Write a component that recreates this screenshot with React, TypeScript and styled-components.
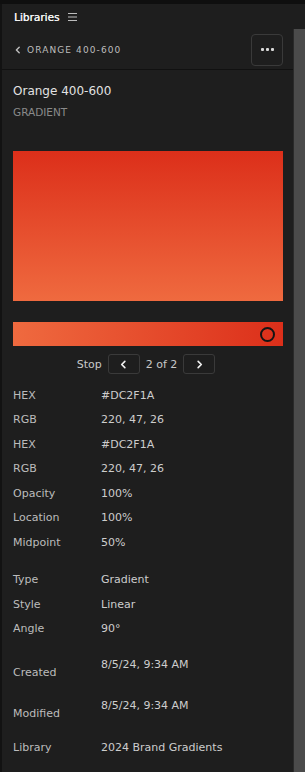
import { createGlobalStyle, styled } from "styled-components";

const GlobalStyle = createGlobalStyle`
  html, body {
    margin: 0;
    padding: 0;
    background: #1e1e1e;
  }
  body {
    font-family: "DejaVu Sans", "Liberation Sans", sans-serif;
    -webkit-font-smoothing: antialiased;
  }
`;

type Row = { label: string; value: string };

const colorRows: Row[] = [
  { label: "HEX", value: "#DC2F1A" },
  { label: "RGB", value: "220, 47, 26" },
  { label: "HEX", value: "#DC2F1A" },
  { label: "RGB", value: "220, 47, 26" },
  { label: "Opacity", value: "100%" },
  { label: "Location", value: "100%" },
  { label: "Midpoint", value: "50%" },
];

const typeRows: Row[] = [
  { label: "Type", value: "Gradient" },
  { label: "Style", value: "Linear" },
  { label: "Angle", value: "90°" },
];

const dateRows: Row[] = [
  { label: "Created", value: "8/5/24, 9:34 AM" },
  { label: "Modified", value: "8/5/24, 9:34 AM" },
];

function Chevron({ dir, size = 9 }: { dir: "left" | "right"; size?: number }) {
  const d = dir === "left" ? "M6 1.5 L2.5 5 L6 8.5" : "M3 1.5 L6.5 5 L3 8.5";
  return (
    <svg width={size} height={size} viewBox="0 0 9 10">
      <path d={d} fill="none" stroke="currentColor" strokeWidth="1.8" strokeLinecap="round" strokeLinejoin="round" />
    </svg>
  );
}

function App() {
  return (
    <Frame>
      <GlobalStyle />
      <TopStrip />
      <Body>
        <Panel>
          <Header>
            <HeaderTitle>Libraries</HeaderTitle>
            <svg width="9" height="8" viewBox="0 0 9 8">
              <path d="M0 0.5 H9 M0 4 H9 M0 7.5 H9" stroke="#bdbdbd" strokeWidth="1" />
            </svg>
          </Header>
          <SubHeader>
            <BackLink>
              <Chevron dir="left" size={8} />
              <span>ORANGE 400-600</span>
            </BackLink>
            <MoreButton>
              <Dot />
              <Dot />
              <Dot />
            </MoreButton>
          </SubHeader>
          <Content>
            <Title>Orange 400-600</Title>
            <Kind>GRADIENT</Kind>
            <Swatch />
            <StopBar>
              <StopHandle />
            </StopBar>
            <StopNav>
              <span>Stop</span>
              <NavButton>
                <Chevron dir="left" />
              </NavButton>
              <span>2 of 2</span>
              <NavButton>
                <Chevron dir="right" />
              </NavButton>
            </StopNav>
            <Props $gap={9}>
              {colorRows.map((r, i) => (
                <PropRow key={i}>
                  <Label>{r.label}</Label>
                  <Value>{r.value}</Value>
                </PropRow>
              ))}
            </Props>
            <Props $gap={13}>
              {typeRows.map((r, i) => (
                <PropRow key={i}>
                  <Label>{r.label}</Label>
                  <Value>{r.value}</Value>
                </PropRow>
              ))}
            </Props>
            <Props $gap={12}>
              {dateRows.map((r, i) => (
                <DateRow key={i}>
                  <Label $drop>{r.label}</Label>
                  <Value>{r.value}</Value>
                </DateRow>
              ))}
              <PropRow>
                <Label>Library</Label>
                <Value>2024 Brand Gradients</Value>
              </PropRow>
            </Props>
          </Content>
        </Panel>
        <ScrollTrack />
      </Body>
    </Frame>
  );
}
export default App;

const Frame = styled.div`
  width: 305px;
  height: 772px;
  display: flex;
  flex-direction: column;
  background: #1e1e1e;
  overflow: hidden;
`;

const TopStrip = styled.div`
  height: 4px;
  background: #0f0f0f;
`;

const Body = styled.div`
  flex: 1;
  display: flex;
`;

const Panel = styled.div`
  flex: 1;
  border-left: 2px solid #121212;
  display: flex;
  flex-direction: column;
`;

const ScrollTrack = styled.div`
  width: 11px;
  margin-top: 25px;
  background: #4b4b4b;
  border-left: 1px solid #2a2a2a;
`;

const Header = styled.div`
  height: 26px;
  display: flex;
  align-items: center;
  gap: 9px;
  padding-left: 12px;
`;

const HeaderTitle = styled.span`
  font-size: 10.5px;
  color: #f2f2f2;
  text-shadow: 0.3px 0 0 #f2f2f2;
`;

const SubHeader = styled.div`
  height: 39px;
  display: flex;
  align-items: center;
  justify-content: space-between;
  padding: 0 10px 0 12px;
  border-bottom: 1px solid #111111;
`;

const BackLink = styled.div`
  display: flex;
  align-items: center;
  gap: 5px;
  color: #bdbdbd;
  font-size: 9px;
  letter-spacing: 1.1px;
`;

const MoreButton = styled.div`
  width: 30px;
  height: 30px;
  border: 1px solid #3a3a3a;
  border-radius: 4px;
  display: flex;
  align-items: center;
  justify-content: center;
  gap: 2px;
`;

const Dot = styled.span`
  width: 3px;
  height: 3px;
  background: #d8d8d8;
  border-radius: 1px;
`;

const Content = styled.div`
  padding: 13px 10px 0 11px;
  display: flex;
  flex-direction: column;
`;

const Title = styled.div`
  font-size: 12px;
  line-height: 17px;
  color: #e2e2e2;
`;

const Kind = styled.div`
  margin-top: 5px;
  font-size: 10.5px;
  line-height: 14px;
  color: #8a8a8a;
`;

const Swatch = styled.div`
  margin-top: 32px;
  height: 150px;
  background: linear-gradient(180deg, #dc2f1a 0%, #ef6a3f 100%);
`;

const StopBar = styled.div`
  margin-top: 21px;
  height: 24px;
  background: linear-gradient(90deg, #ef6a3f 0%, #dc2f1a 100%);
  display: flex;
  align-items: center;
  justify-content: flex-end;
  padding-right: 8px;
`;

const StopHandle = styled.span`
  width: 11px;
  height: 11px;
  border: 2px solid #141414;
  border-radius: 50%;
`;

const StopNav = styled.div`
  margin-top: 8px;
  height: 20px;
  display: flex;
  align-items: center;
  justify-content: center;
  gap: 6px;
  font-size: 11px;
  color: #c8c8c8;
  padding-right: 4px;
`;

const NavButton = styled.div`
  width: 30px;
  height: 18px;
  border: 1px solid #3a3a3a;
  border-radius: 3px;
  display: flex;
  align-items: center;
  justify-content: center;
  color: #f0f0f0;
`;

const Props = styled.div<{ $gap?: number }>`
  margin-top: ${(p) => p.$gap ?? 8}px;
  display: flex;
  flex-direction: column;
`;

const PropRow = styled.div`
  display: grid;
  grid-template-columns: 88px 1fr;
  height: 24.5px;
  align-items: center;
  font-size: 11px;
`;

const DateRow = styled.div`
  display: grid;
  grid-template-columns: 88px 1fr;
  height: 41px;
  align-items: start;
  font-size: 11px;
  line-height: 24.5px;
`;

const Label = styled.span<{ $drop?: boolean }>`
  color: #bcbcbc;
  padding-top: ${(p) => (p.$drop ? 8 : 0)}px;
`;

const Value = styled.span`
  color: #cdcdcd;
`;
